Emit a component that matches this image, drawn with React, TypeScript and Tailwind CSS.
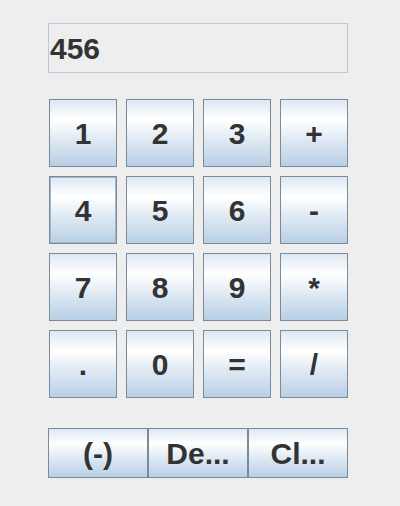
import React from 'react';

const keys = ['1', '2', '3', '+', '4', '5', '6', '-', '7', '8', '9', '*', '.', '0', '=', '/'];

const btn =
  'flex items-center justify-center border border-[#7a8a99] bg-[linear-gradient(180deg,#dde8f3_0%,#ffffff_30%,#dde8f3_62%,#b8cfe5_100%)] text-[30px] font-bold text-[#333333]';

export default function App() {
  return (
    <div className="w-[400px] h-[506px] bg-[#eeeeee] pt-[23px] pl-[48px]" style={{ fontFamily: '"Liberation Sans", Arial, sans-serif' }}>
      <div className="w-[300px] h-[50px] border border-[#bcc8dc] flex items-center pl-[1px] text-[30px] font-bold text-[#333333]">
        456
      </div>

      <div className="mt-[26px] ml-[1px] grid grid-cols-[repeat(4,68px)] auto-rows-[68px] gap-[9px]">
        {keys.map((k) => (
          <button
            key={k}
            className={`${btn} ${k === '4' ? 'shadow-[inset_0_0_0_1px_#a3b8cc]' : ''}`}
          >
            {k}
          </button>
        ))}
      </div>

      <div className="mt-[30px] flex w-[300px] h-[50px]">
        <button className={`${btn} w-[100px]`}>(-)</button>
        <button className={`${btn} w-[100px]`}>De...</button>
        <button className={`${btn} w-[100px]`}>Cl...</button>
      </div>
    </div>
  );
}
